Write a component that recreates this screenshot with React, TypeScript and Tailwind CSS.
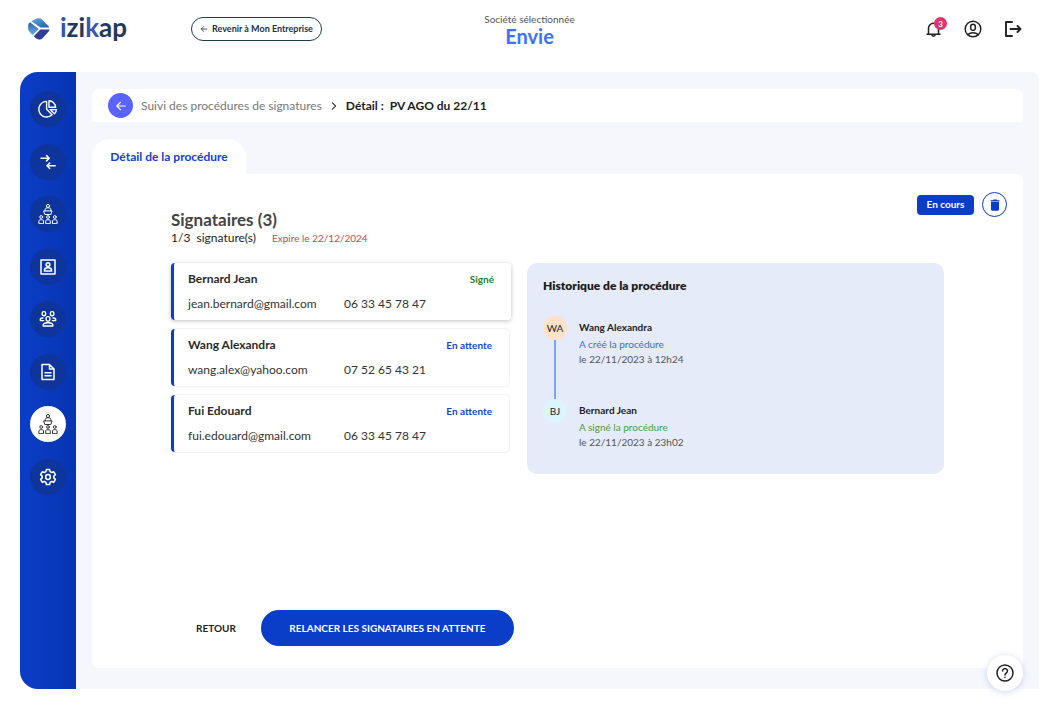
import type { ReactNode } from "react";

interface Signatory {
  id: number;
  name: string;
  email: string;
  phone: string;
  signed: boolean;
}

interface HistoryEvent {
  id: number;
  initials: string;
  name: string;
  action: string;
  date: string;
  avatarClass: string;
  actionClass: string;
}

interface NavItem {
  label: string;
  icon: ReactNode;
  active?: boolean;
}

const signatories: Signatory[] = [
  { id: 1, name: "Bernard Jean", email: "jean.bernard@gmail.com", phone: "06 33 45 78 47", signed: true },
  { id: 2, name: "Wang Alexandra", email: "wang.alex@yahoo.com", phone: "07 52 65 43 21", signed: false },
  { id: 3, name: "Fui Edouard", email: "fui.edouard@gmail.com", phone: "06 33 45 78 47", signed: false },
];

const history: HistoryEvent[] = [
  {
    id: 1,
    initials: "WA",
    name: "Wang Alexandra",
    action: "A créé la procédure",
    date: "le 22/11/2023 à 12h24",
    avatarClass: "bg-[#ffe2c8]",
    actionClass: "text-[#3f68d6]",
  },
  {
    id: 2,
    initials: "BJ",
    name: "Bernard Jean",
    action: "A signé la procédure",
    date: "le 22/11/2023 à 23h02",
    avatarClass: "bg-[#daf5fd]",
    actionClass: "text-[#4c9a3f]",
  },
];

function Icon({ size, stroke = 1.5, children }: { size: number; stroke?: number; children: ReactNode }) {
  return (
    <svg
      width={size}
      height={size}
      viewBox="0 0 20 20"
      fill="none"
      stroke="currentColor"
      strokeWidth={stroke}
      strokeLinecap="round"
      strokeLinejoin="round"
      aria-hidden="true"
    >
      {children}
    </svg>
  );
}

// speaker at a desk with three people in front
const assemblyIcon = (
  <Icon size={20} stroke={1}>
    <circle cx="10" cy="2" r="1.6" />
    <path d="M7.2 6.6V5.4c0-1 1-1.6 2.8-1.6s2.8.6 2.8 1.6v1.2M6 6.9h8l-1.2 3.6H7.2z" />
    <circle cx="3.2" cy="13" r="1.4" />
    <circle cx="10" cy="13" r="1.4" />
    <circle cx="16.8" cy="13" r="1.4" />
    <path d="M.9 19.300v-2.300c0-.9.8-1.300 2.300-1.300s2.300.4 2.300 1.300v2.300zM7.700 19.300v-2.300c0-.9.8-1.300 2.300-1.300s2.300.4 2.300 1.300v2.300zM14.500 19.300v-2.300c0-.9.8-1.300 2.300-1.300s2.300.4 2.300 1.300v2.300z" />
  </Icon>
);

const navItems: NavItem[] = [
  {
    label: "Tableau de bord",
    icon: (
      <Icon size={20} stroke={1.4}>
        <path d="M8.6 2.4a7.8 7.8 0 1 0 5.5 13.4L8.6 10.3z" />
        <path d="M11 1.8v6.4h6.6A6.6 6.6 0 0 0 11 1.8z" />
        <path d="M12.2 10.6h6.2a6 6 0 0 1-1.9 4.2z" />
      </Icon>
    ),
  },
  {
    label: "Mouvements",
    icon: (
      <Icon size={20} stroke={1.5}>
        <path d="M3 6.2h8M8.5 3.5l2.7 2.7-2.7 2.7M17.2 13.8h-8M11.7 11.1 9 13.8l2.7 2.7" />
      </Icon>
    ),
  },
  { label: "Assemblées", icon: assemblyIcon },
  {
    label: "Contacts",
    icon: (
      <Icon size={20} stroke={1.5}>
        <path d="M3 3h14v14H3z" />
        <circle cx="10" cy="7.6" r="1.9" />
        <path d="M6.4 14v-.8c0-1.6 1.5-2.4 3.6-2.4s3.6.8 3.6 2.4v.8z" />
      </Icon>
    ),
  },
  {
    label: "Actionnaires",
    icon: (
      <Icon size={20} stroke={1.4}>
        <rect x="4.2" y="2.6" width="3.4" height="4.2" rx="1.5" />
        <rect x="12.4" y="2.6" width="3.4" height="4.2" rx="1.5" />
        <rect x="8.1" y="7.6" width="3.8" height="4.6" rx="1.7" />
        <path d="M5.2 17v-1c0-1.6 1.9-2.2 4.8-2.2s4.8.6 4.8 2.2v1z" />
        <path d="M5.6 11.6H2.3v-.9c0-1.1.9-1.7 2.7-1.7M14.4 11.6h3.3v-.9c0-1.1-.9-1.7-2.7-1.7" />
      </Icon>
    ),
  },
  {
    label: "Documents",
    icon: (
      <Icon size={20} stroke={1.5}>
        <path d="M4 2.5h7.5L16 7v10.5H4zM11.5 2.5V7H16M7 10.8h6M7 13.8h6" />
      </Icon>
    ),
  },
  { label: "Signatures", icon: assemblyIcon, active: true },
  {
    label: "Paramètres",
    icon: (
      <Icon size={20} stroke={1.5}>
        <circle cx="10" cy="10" r="2.4" />
        <path d="M8.4 2.4h3.2l.5 2.2 1.6.9 2.1-.7 1.6 2.8-1.6 1.5v1.8l1.6 1.5-1.6 2.8-2.1-.7-1.6.9-.5 2.2H8.4l-.5-2.2-1.6-.9-2.1.7-1.6-2.8 1.6-1.5V9.1L2.6 7.6l1.6-2.8 2.1.7 1.6-.9z" />
      </Icon>
    ),
  },
];

function ArrowLeft({ size }: { size: number }) {
  return (
    <Icon size={size} stroke={2}>
      <path d="M17 10H3M9 4l-6 6 6 6" />
    </Icon>
  );
}

function Logo() {
  return (
    <a href="#" className="flex items-center gap-2.5" aria-label="izikap">
      <svg width="22" height="22" viewBox="0 0 22 22" aria-hidden="true">
        <defs>
          <linearGradient id="logo-top" x1="0" y1="0" x2="1" y2="1">
            <stop offset="0" stopColor="#6aaade" />
            <stop offset="1" stopColor="#1a5cab" />
          </linearGradient>
          <linearGradient id="logo-left" x1="0" y1="0" x2="0" y2="1">
            <stop offset="0" stopColor="#2b62aa" />
            <stop offset="1" stopColor="#69b4e8" />
          </linearGradient>
        </defs>
        <path d="M3.2 3.2 8.5.6Q11.5-.6 14 1.4L20.6 8.2Q21.2 8.8 21 9.5H12.5z" fill="url(#logo-top)" />
        <path d="M2 4.3 10.8 11 4.6 17.2 1 13.2Q0 12 .1 10V7.3Q.2 5.3 2 4.3z" fill="url(#logo-left)" />
        <path d="M12.4 11.5H21.4Q21.5 12.6 20.6 13.5L14.6 20.2Q12.600 22.3 9.8 21.3 8 20.6 5.8 18.2z" fill="#303f95" />
      </svg>
      <span className="pb-1 text-[26px] leading-7 font-bold text-[#24385b]">
        <span className="text-[#3054b0]">i</span>zi<span className="text-[#3a55b4]">k</span>ap
      </span>
    </a>
  );
}

function SignatoryCard({ signatory }: { signatory: Signatory }) {
  return (
    <li
      className={`rounded border-l-[3px] border-[#0a3dc8] bg-white py-[7px] pr-[17px] pl-3.5 ${
        signatory.signed
          ? "shadow-[0_1px_4px_rgba(0,0,0,0.25)]"
          : "mr-0.5 shadow-[0_0_2px_rgba(0,0,0,0.18)]"
      }`}
    >
      <div className="flex items-center justify-between leading-[18px] font-bold">
        <span className="text-xs leading-[18px] text-[#2b2b2b]">{signatory.name}</span>
        <span className={`text-[10px] ${signatory.signed ? "text-[#2c7d1a]" : "text-[#1546cb]"}`}>
          {signatory.signed ? "Signé" : "En attente"}
        </span>
      </div>
      <div className="mt-[7px] grid grid-cols-[156px_1fr] text-xs leading-[18px] text-[#333]">
        <span>{signatory.email}</span>
        <span>{signatory.phone}</span>
      </div>
    </li>
  );
}

export default function App() {
  return (
    <div className="flex min-h-screen flex-col bg-white font-['Lato','Open_Sans',sans-serif] text-[#222]">
      <header className="grid h-[72px] grid-cols-[1fr_auto_1fr] items-start pr-8 pl-7">
        <div className="flex items-center gap-16 pt-[13px]">
          <Logo />
          <button className="flex h-6 items-center gap-1 rounded-full border border-[#1c3d50] px-2 text-[9px] font-bold text-[#1c3045]">
            <ArrowLeft size={8} />
            Revenir à Mon Entreprise
          </button>
        </div>
        <div className="pt-3 pl-2 text-center">
          <p className="text-[10px] leading-[14px] text-[#555]">Société sélectionnée</p>
          <p className="text-xl leading-5 font-bold text-[#3b73fb]">Envie</p>
        </div>
        <div className="flex items-center justify-end gap-5 pt-[19px]">
          <button className="relative" aria-label="Notifications">
            <Icon size={20} stroke={1.5}>
              <path d="M4 15.2h13M5.5 15V9.2a5 5 0 0 1 10 0V15M8.8 15.5a1.7 1.7 0 1 0 3.4 0" />
            </Icon>
            <span className="absolute -top-0.5 -right-1 flex size-[13px] items-center justify-center rounded-full bg-[#e5316c] text-[8px] font-bold text-white">
              3
            </span>
          </button>
          <button aria-label="Mon compte">
            <Icon size={20} stroke={1.5}>
              <circle cx="10" cy="10" r="7.8" />
              <rect x="7.7" y="5.2" width="4.6" height="6.2" rx="2.3" />
              <path d="M4.8 15.8c1.2-1.4 3-2.1 5.2-2.1s4 .7 5.2 2.1" />
            </Icon>
          </button>
          <button aria-label="Se déconnecter">
            <Icon size={20} stroke={1.9}>
              <path d="M9 3H3v14h6M7.5 10h10M14.5 7l3 3-3 3" />
            </Icon>
          </button>
        </div>
      </header>

      <div className="mr-4 mb-[15px] ml-5 flex flex-1">
        <nav className="w-14 shrink-0 rounded-l-[18px] bg-linear-to-r from-[#0a3dc8] to-[#0835b0] pt-[19px]">
          <ul className="flex h-[404px] flex-col items-center justify-between">
            {navItems.map((item) => (
              <li key={item.label}>
                <a
                  href="#"
                  aria-label={item.label}
                  className={`flex size-9 items-center justify-center rounded-full ${
                    item.active ? "bg-white text-[#333]" : "bg-[#0e359c] text-white"
                  }`}
                >
                  {item.icon}
                </a>
              </li>
            ))}
          </ul>
        </nav>

        <main className="flex flex-1 flex-col rounded-tr-lg bg-[#f6f7fd] px-4 pt-[17px] pb-[21px]">
          <div className="flex h-[33px] items-center rounded-t-lg bg-white px-4 text-xs">
            <button
              className="flex size-[25px] items-center justify-center rounded-full bg-[#5b63ff] text-white"
              aria-label="Retour à la liste"
            >
              <ArrowLeft size={12} />
            </button>
            <a href="#" className="ml-2 text-[#777]">
              Suivi des procédures de signatures
            </a>
            <span className="mx-2 text-[#333]">
              <Icon size={8} stroke={2.8}>
                <path d="m6 2 8 8-8 8" />
              </Icon>
            </span>
            <h1 className="font-bold whitespace-pre text-[#1c1c1c]">Détail :  PV AGO du 22/11</h1>
          </div>

          <div className="mt-[17px] flex">
            <button className="h-[35px] min-w-[154px] rounded-t-[18px] bg-white px-4 text-xs font-bold text-[#1142c9]">
              Détail de la procédure
            </button>
          </div>

          <section className="flex flex-1 flex-col rounded-tr-md rounded-b-md bg-white px-4 pt-[18px] pb-[22px]">
            <div className="flex items-start justify-between pl-[63px]">
              <div className="pt-[18px]">
                <h2 className="text-[17px] leading-5 font-bold text-[#444]">Signataires (3)</h2>
                <p className="flex items-center gap-4 text-xs leading-4">
                  <span className="whitespace-pre">1/3  signature(s)</span>
                  <span className="text-[10px] text-[#d9434e]">Expire le 22/12/2024</span>
                </p>
              </div>
              <div className="flex items-center gap-2">
                <span className="flex h-5 min-w-[57px] items-center justify-center rounded bg-[#0a3dc8] px-2 text-[10px] font-bold text-white">
                  En cours
                </span>
                <button
                  className="flex size-[25px] items-center justify-center rounded-full border border-[#0a3dc8] text-[#0a3dc8]"
                  aria-label="Supprimer la procédure"
                >
                  <svg width="10" height="12" viewBox="0 0 10 12" fill="currentColor" aria-hidden="true">
                    <path d="M.5 1.2h2.3L3.400.4h3.2l.6.8h2.3v1.2h-9zM1 3h8v7.6q0 1.1-1.1 1.1H2.1Q1 11.7 1 10.6z" />
                  </svg>
                </button>
              </div>
            </div>

            <div className="mt-[17px] grid grid-cols-[340fr_417fr] items-start gap-4 px-[63px]">
              <ul className="flex flex-col gap-[9px]">
                {signatories.map((signatory) => (
                  <SignatoryCard key={signatory.id} signatory={signatory} />
                ))}
              </ul>

              <div className="rounded-[10px] bg-[#e6ebfa] px-4 pt-3 pb-6">
                <h3 className="text-xs leading-[22px] font-extrabold text-[#1c1c1c]">Historique de la procédure</h3>
                <ol className="mt-[19px]">
                  {history.map((event, index) => (
                    <li key={event.id} className="flex gap-3">
                      <div className="flex flex-col items-center">
                        <span
                          className={`flex size-6 items-center justify-center rounded-full text-[10px] ${event.avatarClass}`}
                        >
                          {event.initials}
                        </span>
                        {index < history.length - 1 && <span className="h-[59px] w-0.5 bg-[#7da2fb]" />}
                      </div>
                      <div className="pt-1 text-[10px] leading-[15px]">
                        <p className="font-bold">{event.name}</p>
                        <p className={`mt-0.5 ${event.actionClass}`}>{event.action}</p>
                        <p className="text-[#555]">{event.date}</p>
                      </div>
                    </li>
                  ))}
                </ol>
              </div>
            </div>

            <div className="mt-auto flex items-center pl-[63px] text-[10px] font-bold">
              <button className="h-9 px-[25px]">RETOUR</button>
              <button className="h-9 min-w-[253px] rounded-full bg-[#0a3dc8] px-6 text-white">
                RELANCER LES SIGNATAIRES EN ATTENTE
              </button>
            </div>
          </section>
        </main>
      </div>

      <button
        className="fixed right-8 bottom-[13px] flex size-9 items-center justify-center rounded-full bg-white text-[#222] shadow-[0_1px_6px_rgba(60,90,220,0.25)]"
        aria-label="Aide"
      >
        <Icon size={20} stroke={1.5}>
          <circle cx="10" cy="10" r="8" />
          <path d="M7.6 8a2.4 2.4 0 1 1 3.7 2c-.9.6-1.3 1-1.3 2M10 14.3v.1" />
        </Icon>
      </button>
    </div>
  );
}
